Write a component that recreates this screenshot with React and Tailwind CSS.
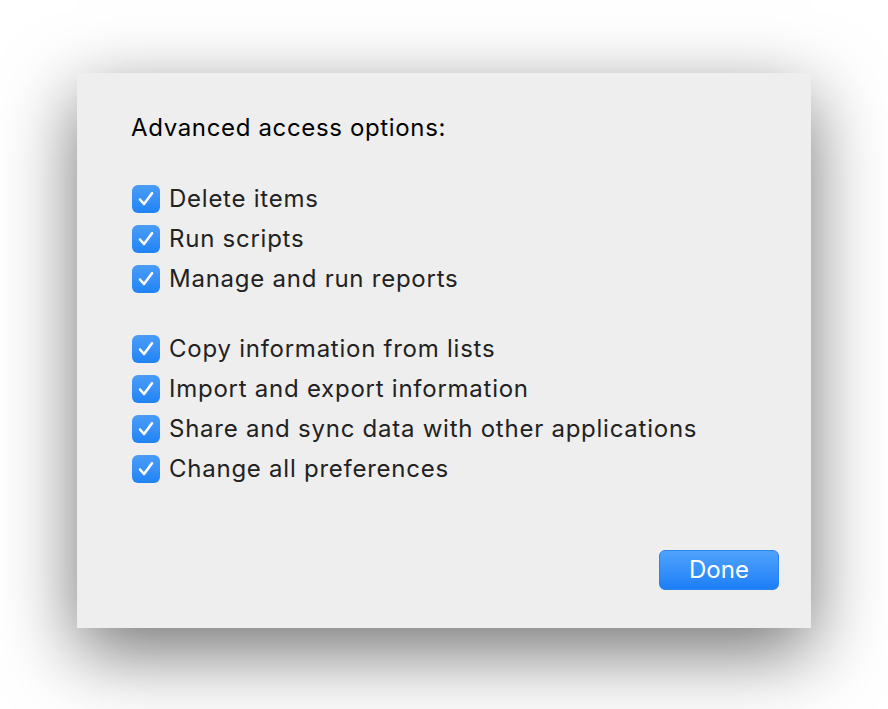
import React from "react";

const groups = [
  ["Delete items", "Run scripts", "Manage and run reports"],
  [
    "Copy information from lists",
    "Import and export information",
    "Share and sync data with other applications",
    "Change all preferences",
  ],
];

function Check() {
  return (
    <span className="flex h-[28px] w-[28px] shrink-0 items-center justify-center rounded-[6px] bg-gradient-to-b from-[#4a9df8] to-[#1f83f6]">
      <svg width="20" height="20" viewBox="0 0 20 20" fill="none">
        <path
          d="M4 10.5 L8 15 L16 4.2"
          stroke="white"
          strokeWidth="2.6"
          strokeLinecap="round"
          strokeLinejoin="round"
        />
      </svg>
    </span>
  );
}

export default function App() {
  return (
    <div
      className="min-h-[709px] w-full bg-white pl-[77px] pt-[73px]"
      style={{ fontFamily: "Inter, 'Noto Sans', sans-serif" }}
    >
      <div className="relative flex h-[555px] w-[734px] flex-col bg-[#eeeeee] pl-[54px] pt-[41px] shadow-[0_24px_70px_rgba(0,0,0,0.55)]">
        <h1 className="text-[24px] leading-[28px] tracking-[0.65px] text-black">
          Advanced access options:
        </h1>

        <div className="mt-[37px] flex flex-col gap-[30px] pl-[1px]">
          {groups.map((group, gi) => (
            <div key={gi} className="flex flex-col">
              {group.map((label) => (
                <label
                  key={label}
                  className="flex h-[40px] items-center gap-[9px] text-[24px] tracking-[0.75px] text-[#222222]"
                >
                  <Check />
                  <span>{label}</span>
                </label>
              ))}
            </div>
          ))}
        </div>

        <div className="mt-auto flex justify-end pb-[38px] pr-[32px]">
          <button className="h-[40px] w-[120px] rounded-[6px] border border-[#2a83ee] bg-gradient-to-b from-[#4fa3fc] to-[#1a7ef7] text-[24px] text-white">
            Done
          </button>
        </div>
      </div>
    </div>
  );
}
